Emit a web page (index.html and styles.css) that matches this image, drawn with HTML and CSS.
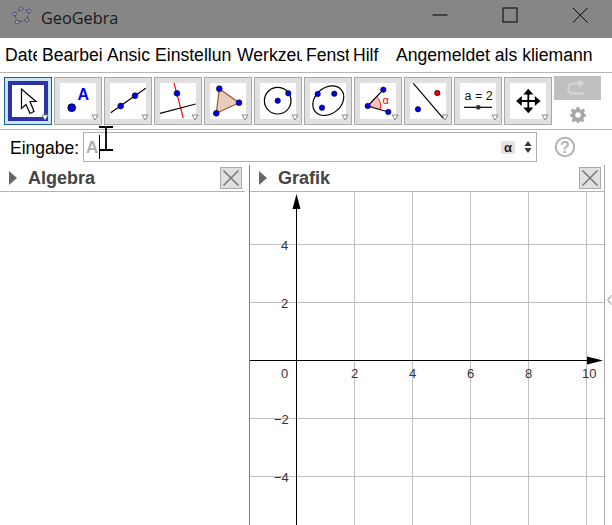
FILE: index.html
```html
<!DOCTYPE html>
<html lang="de">
<head>
<meta charset="utf-8">
<title>GeoGebra</title>
<link rel="stylesheet" href="styles.css">
</head>
<body>
<div class="app">
  <header class="titlebar">
    <svg class="app-logo" viewBox="0 0 20 20" width="20" height="20">
      <polygon points="9,2.5 17,5 15,14 5,16 2.5,8" fill="none" stroke="#444" stroke-width="0.8" stroke-dasharray="3 1.5"/>
      <g fill="#9a9ae0" stroke="#333" stroke-width="0.6">
        <circle cx="9" cy="2.5" r="1.8"/><circle cx="17" cy="5" r="1.8"/><circle cx="15" cy="14" r="1.8"/><circle cx="5" cy="16" r="1.8"/><circle cx="2.5" cy="8" r="1.8"/>
      </g>
    </svg>
    <span class="app-name">GeoGebra</span>
    <div class="win-controls">
      <svg class="win-btn" viewBox="0 0 16 16" width="16" height="16"><path d="M0.5 8H15.5" stroke="#000" fill="none"/></svg>
      <svg class="win-btn" viewBox="0 0 16 16" width="16" height="16"><rect x="1" y="1" width="14" height="14" stroke="#000" fill="none"/></svg>
      <svg class="win-btn" viewBox="0 0 16 16" width="16" height="16"><path d="M1 1L15.5 15.5M15.5 1L1 15.5" stroke="#000" fill="none"/></svg>
    </div>
  </header>

  <nav class="menubar">
    <span class="mi w-date">Datei</span>
    <span class="mi w-bearb">Bearbeiten</span>
    <span class="mi w-ansi">Ansicht</span>
    <span class="mi w-einst">Einstellungen</span>
    <span class="mi w-werk">Werkzeuge</span>
    <span class="mi w-fens">Fenster</span>
    <span class="mi w-hilf">Hilfe</span>
    <span class="login">Angemeldet als kliemann</span>
  </nav>

  <section class="toolbar">
    <div class="tool selected">
      <div class="sel-frame">
        <svg viewBox="0 0 32 32" width="32" height="32"><path d="M9.5 4V23.5L14 19.5L18 28.5L22 26.5L18 16.5H24Z" fill="#fff" stroke="#000" stroke-width="1.2" stroke-linejoin="miter"/></svg>
      </div>
      <svg class="drop" viewBox="0 0 8 7" width="8" height="7"><path d="M1 1H7L4 6Z" fill="#fff" stroke="#888"/></svg>
    </div>
    <div class="tool"><div class="face">
      <svg viewBox="0 0 36 36" width="36" height="36">
        <circle cx="11.7" cy="24.7" r="3.9" fill="#0000f0" stroke="#000" stroke-width="0.8"/>
        <text x="17.5" y="17" class="t-a">A</text>
      </svg></div><svg class="drop" viewBox="0 0 8 7" width="8" height="7"><path d="M1 1H7L4 6Z" fill="#fff" stroke="#888"/></svg></div>
    <div class="tool"><div class="face">
      <svg viewBox="0 0 36 36" width="36" height="36">
        <path d="M0.7 29.7L35.7 5.3" stroke="#000" stroke-width="1.2"/>
        <circle cx="10.7" cy="23" r="2.9" fill="#0000f0" stroke="#000" stroke-width="0.6"/>
        <circle cx="25" cy="12.7" r="2.9" fill="#0000f0" stroke="#000" stroke-width="0.6"/>
      </svg></div><svg class="drop" viewBox="0 0 8 7" width="8" height="7"><path d="M1 1H7L4 6Z" fill="#fff" stroke="#888"/></svg></div>
    <div class="tool"><div class="face">
      <svg viewBox="0 0 36 36" width="36" height="36">
        <path d="M14 0L23.3 35" stroke="#f00" stroke-width="1.1"/>
        <path d="M0 30.3L35.7 21" stroke="#000" stroke-width="1.2"/>
        <circle cx="17" cy="10.3" r="2.9" fill="#0000f0" stroke="#000" stroke-width="0.6"/>
      </svg></div><svg class="drop" viewBox="0 0 8 7" width="8" height="7"><path d="M1 1H7L4 6Z" fill="#fff" stroke="#888"/></svg></div>
    <div class="tool"><div class="face">
      <svg viewBox="0 0 36 36" width="36" height="36">
        <polygon points="9.3,5.7 29,19.7 6.3,30.3" fill="#e8cdbd" stroke="#a2502c" stroke-width="1.2"/>
        <circle cx="9.3" cy="5.7" r="2.9" fill="#0000f0" stroke="#000" stroke-width="0.6"/>
        <circle cx="29" cy="19.7" r="2.9" fill="#0000f0" stroke="#000" stroke-width="0.6"/>
        <circle cx="6.3" cy="30.3" r="2.9" fill="#0000f0" stroke="#000" stroke-width="0.6"/>
      </svg></div><svg class="drop" viewBox="0 0 8 7" width="8" height="7"><path d="M1 1H7L4 6Z" fill="#fff" stroke="#888"/></svg></div>
    <div class="tool"><div class="face">
      <svg viewBox="0 0 36 36" width="36" height="36">
        <circle cx="17.7" cy="17.7" r="13.3" fill="none" stroke="#000" stroke-width="1.2"/>
        <circle cx="17.7" cy="17.7" r="2.7" fill="#0000f0" stroke="#000" stroke-width="0.6"/>
        <circle cx="28.3" cy="10.3" r="2.7" fill="#0000f0" stroke="#000" stroke-width="0.6"/>
      </svg></div><svg class="drop" viewBox="0 0 8 7" width="8" height="7"><path d="M1 1H7L4 6Z" fill="#fff" stroke="#888"/></svg></div>
    <div class="tool"><div class="face">
      <svg viewBox="0 0 36 36" width="36" height="36">
        <ellipse cx="18.3" cy="17.7" rx="17" ry="13" transform="rotate(-40 18.3 17.7)" fill="none" stroke="#000" stroke-width="1.2"/>
        <circle cx="7.7" cy="11" r="2.7" fill="#0000f0" stroke="#000" stroke-width="0.6"/>
        <circle cx="24.3" cy="10.7" r="2.7" fill="#0000f0" stroke="#000" stroke-width="0.6"/>
        <circle cx="12" cy="24.7" r="2.7" fill="#0000f0" stroke="#000" stroke-width="0.6"/>
      </svg></div><svg class="drop" viewBox="0 0 8 7" width="8" height="7"><path d="M1 1H7L4 6Z" fill="#fff" stroke="#888"/></svg></div>
    <div class="tool"><div class="face">
      <svg viewBox="0 0 36 36" width="36" height="36">
        <path d="M7.7 23L16.5 13.8A13 13 0 0 1 20.3 26.6Z" fill="#f6bfbf"/>
        <path d="M16.5 13.8A13 13 0 0 1 20.3 26.6" fill="none" stroke="#f00" stroke-width="0.9"/>
        <path d="M23.3 6.7L7.7 23L28.3 29" fill="none" stroke="#000" stroke-width="1.2"/>
        <circle cx="23.3" cy="6.7" r="2.7" fill="#0000f0" stroke="#000" stroke-width="0.6"/>
        <circle cx="7.7" cy="23" r="2.7" fill="#0000f0" stroke="#000" stroke-width="0.6"/>
        <circle cx="28.3" cy="29" r="2.7" fill="#0000f0" stroke="#000" stroke-width="0.6"/>
        <text x="22.5" y="21" class="t-alpha">α</text>
      </svg></div><svg class="drop" viewBox="0 0 8 7" width="8" height="7"><path d="M1 1H7L4 6Z" fill="#fff" stroke="#888"/></svg></div>
    <div class="tool"><div class="face">
      <svg viewBox="0 0 36 36" width="36" height="36">
        <path d="M3.3 0.3L33.3 35.3" stroke="#000" stroke-width="1.2"/>
        <circle cx="27.3" cy="10" r="2.7" fill="#f00000" stroke="#000" stroke-width="0.6"/>
        <circle cx="8" cy="26.3" r="2.7" fill="#0000f0" stroke="#000" stroke-width="0.6"/>
      </svg></div><svg class="drop" viewBox="0 0 8 7" width="8" height="7"><path d="M1 1H7L4 6Z" fill="#fff" stroke="#888"/></svg></div>
    <div class="tool"><div class="face">
      <svg viewBox="0 0 36 36" width="36" height="36">
        <text x="4.5" y="17" class="t-eq">a = 2</text>
        <path d="M4 24.3H32" stroke="#000" stroke-width="1.2"/>
        <circle cx="18.3" cy="24.3" r="2.4" fill="#333"/>
      </svg></div><svg class="drop" viewBox="0 0 8 7" width="8" height="7"><path d="M1 1H7L4 6Z" fill="#fff" stroke="#888"/></svg></div>
    <div class="tool"><div class="face">
      <svg viewBox="0 0 36 36" width="36" height="36">
        <path d="M18.3 5.7L23.3 11.5H19.2V17.1H24.8V13L30.6 18L24.8 23V18.9H19.2V24.5H23.3L18.3 30.3L13.3 24.5H17.4V18.9H11.8V23L6 18L11.8 13V17.1H17.4V11.5H13.3Z" fill="#000"/>
      </svg></div><svg class="drop" viewBox="0 0 8 7" width="8" height="7"><path d="M1 1H7L4 6Z" fill="#fff" stroke="#888"/></svg></div>
    <div class="side-tools">
      <div class="redo">
        <svg viewBox="0 0 47 24" width="47" height="24"><path d="M25 7.5H18C13 7.5 13 17.5 18 17.5H30" fill="none" stroke="#d6d6d6" stroke-width="2"/><path d="M24.5 3.5L30.5 7.5L24.5 11.5Z" fill="#d6d6d6"/></svg>
      </div>
      <svg class="gear" viewBox="0 0 16 16" width="16" height="16">
        <path d="M6.6 0H9.4L9.8 2.3L11.4 3L13.3 1.6L15.2 3.6L13.8 5.4L14.5 7L16 7.4V9.6L13.9 10L13.2 11.6L14.4 13.4L12.6 15.2L10.8 14L9.4 14.6L9 16H7L6.6 14.6L5.2 14L3.4 15.2L1.6 13.4L2.8 11.6L2.1 10L0 9.6V7.4L1.5 7L2.2 5.4L0.8 3.6L2.7 1.6L4.6 3L6.2 2.3Z M8 5.2A2.8 2.8 0 1 0 8 10.8A2.8 2.8 0 1 0 8 5.2Z" fill="#a6a6a6" fill-rule="evenodd"/>
      </svg>
    </div>
  </section>

  <section class="inputbar">
    <label class="input-label">Eingabe:</label>
    <div class="input-box">
      <span class="hint">A</span><span class="caret"></span>
      <span class="alpha">α</span>
      <svg class="spin" viewBox="0 0 8 12" width="8" height="12"><path d="M4 0L7.5 5H0.5Z M4 12L0.5 7H7.5Z" fill="#333"/></svg>
    </div>
    <svg class="help" viewBox="0 0 22 22" width="22" height="22">
      <circle cx="11" cy="11" r="9.2" fill="none" stroke="#b2b2b2" stroke-width="2"/>
      <text x="11" y="16.5" class="t-help">?</text>
    </svg>
    <svg class="ibeam" viewBox="0 0 14 25" width="14" height="25"><path d="M0 1H5.5Q7 1 7 2Q7 1 8.5 1H14M7 2V23M0 24H14" fill="none" stroke="#000" stroke-width="1.8"/></svg>
  </section>

  <main class="panels">
    <section class="panel algebra">
      <div class="panel-head">
        <span class="tri"></span>
        <h2 class="panel-title">Algebra</h2>
        <svg class="close" viewBox="0 0 22 22" width="22" height="22"><rect x="0.5" y="0.5" width="21" height="21" fill="#e0e0e0" stroke="#aaa"/><path d="M3.5 3.5L18.5 18.5M18.5 3.5L3.5 18.5" stroke="#777" stroke-width="1.5"/></svg>
      </div>
    </section>
    <section class="panel grafik">
      <div class="panel-head">
        <span class="tri"></span>
        <h2 class="panel-title">Grafik</h2>
        <svg class="close" viewBox="0 0 22 22" width="22" height="22"><rect x="0.5" y="0.5" width="21" height="21" fill="#e0e0e0" stroke="#aaa"/><path d="M3.5 3.5L18.5 18.5M18.5 3.5L3.5 18.5" stroke="#777" stroke-width="1.5"/></svg>
      </div>
      <svg class="plot" viewBox="250 192 354 333" width="354" height="333">
        <g stroke="#c0c0c0" stroke-width="1">
          <path d="M354.5 192V525M412.5 192V525M470.5 192V525M528.5 192V525M586.5 192V525"/>
          <path d="M250 244.5H604M250 302.5H604M250 418.5H604M250 476.5H604"/>
        </g>
        <g stroke="#000" stroke-width="1">
          <path d="M250 360.5H590"/>
          <path d="M296.5 206V525"/>
        </g>
        <path d="M603 360.5L587 356.5V364.5Z" fill="#000"/>
        <path d="M296.5 194L292.5 209H300.5Z" fill="#000"/>
        <g class="axis-label">
          <text x="281" y="378">0</text>
          <text x="351" y="378">2</text>
          <text x="409" y="378">4</text>
          <text x="467" y="378">6</text>
          <text x="525" y="378">8</text>
          <text x="582" y="378">10</text>
          <text x="281" y="250">4</text>
          <text x="281" y="308">2</text>
          <text x="274" y="424">−2</text>
          <text x="274" y="482">−4</text>
        </g>
      </svg>
    </section>
    <svg class="edge-arrow" viewBox="0 0 5 10" width="5" height="10"><path d="M4.5 0.5L0.5 5L4.5 9.5" fill="#eee" stroke="#555" stroke-dasharray="1.2 0.6"/></svg>
  </main>
</div>
</body>
</html>
```
FILE: styles.css
```css
* { box-sizing: border-box; }
html, body { margin: 0; padding: 0; background: #fff; }
.app {
  width: 612px;
  height: 525px;
  overflow: hidden;
  font-family: "Liberation Sans", Arial, sans-serif;
  color: #000;
  display: flex;
  flex-direction: column;
}

/* title bar */
.titlebar {
  height: 38px;
  flex: none;
  background: #868686;
  display: flex;
  align-items: center;
  padding-left: 12px;
}
.app-logo { flex: none; margin-top: -6px; }
.app-name {
  margin-left: 9px;
  font-family: "Open Sans", sans-serif;
  font-size: 16.3px;
  color: #1a1a1a;
  margin-top: -3px;
}
.win-controls {
  margin-left: auto;
  display: flex;
  gap: 54px;
  padding-right: 24px;
  margin-top: -8px;
}
.win-btn { display: block; }

/* menu */
.menubar {
  height: 35px;
  flex: none;
  display: flex;
  align-items: center;
  border-bottom: 1px solid #b4b4b4;
  font-size: 17.6px;
  padding-left: 5px;
  padding-top: 1px;
}
.mi { display: block; overflow: hidden; white-space: nowrap; flex: none; margin-right: 5px; }
.w-date { width: 32px; }
.w-bearb { width: 60px; }
.w-ansi { width: 43px; }
.w-einst { width: 77px; }
.w-werk { width: 65px; margin-right: 4px; }
.w-fens { width: 43px; margin-right: 4px; }
.w-hilf { width: 26px; margin-right: 17px; }
.login { white-space: nowrap; }

/* toolbar */
.toolbar {
  height: 57px;
  flex: none;
  display: flex;
  gap: 2px;
  padding: 4px 0 0 4px;
  border-bottom: 1px solid #b4b4b4;
  position: relative;
}
.tool {
  width: 48px;
  height: 48px;
  flex: none;
  border: 1px solid #a8a8a8;
  background: #e0e0e0;
  padding: 5px;
  position: relative;
}
.face {
  width: 36px;
  height: 36px;
  background: #fff;
}
.face svg, .sel-frame svg { display: block; overflow: visible; }
.tool.selected {
  background: #cde4f6;
  border-color: #1b6199;
  padding: 3px;
}
.sel-frame {
  width: 40px;
  height: 40px;
  border: 4px solid #2b33a6;
  background: #fff;
}
.drop { position: absolute; right: 2px; bottom: 3px; }
.side-tools {
  width: 47px;
  flex: none;
  margin-top: -1px;
  display: flex;
  flex-direction: column;
  align-items: center;
}
.redo { width: 47px; height: 24px; background: #c0c0c0; }
.redo svg { display: block; }
.gear { margin-top: 7px; }

/* input */
.inputbar {
  height: 35px;
  flex: none;
  display: flex;
  align-items: flex-start;
  position: relative;
}
.input-label {
  margin: 9px 0 0 10px;
  width: 73px;
  font-size: 17.5px;
  line-height: 18px;
}
.input-box {
  margin-top: 2px;
  width: 454px;
  height: 30px;
  border: 1px solid #b0b0b0;
  display: flex;
  align-items: center;
  position: relative;
}
.hint {
  margin-left: 2px;
  margin-top: 2px;
  font-weight: bold;
  font-size: 17px;
  color: #b0b0b0;
}
.caret { width: 1px; height: 24px; background: #000; margin-left: 1px; }
.alpha {
  margin-left: auto;
  width: 14px;
  height: 13px;
  background: #e2e2e2;
  font-size: 13px;
  font-weight: bold;
  line-height: 13px;
  text-align: center;
  color: #222;
}
.spin { margin: 0 4px 0 9px; }
.help { margin: 6px 0 0 17px; flex: none; }
.t-help { font: bold 16px "Liberation Sans", sans-serif; fill: #b2b2b2; text-anchor: middle; }
.ibeam { position: absolute; left: 99px; top: -4px; }

/* panels */
.panels {
  flex: 1;
  display: flex;
  position: relative;
  min-height: 0;
}
.panel { display: flex; flex-direction: column; min-height: 0; }
.algebra { width: 249px; flex: none; padding-right: 4px; }
.grafik { width: 356px; flex: none; border-left: 1px solid #808080; border-right: 1px solid #a8a8a8; }
.panel-head {
  height: 27px;
  flex: none;
  display: flex;
  align-items: center;
  border-bottom: 1px solid #b4b4b4;
  padding: 0 3px 0 9px;
}
.tri {
  width: 0;
  height: 0;
  border-left: 8px solid #666;
  border-top: 7.5px solid transparent;
  border-bottom: 7.5px solid transparent;
  flex: none;
  margin-top: -1px;
}
.panel-title {
  margin: 1px 0 0 11px;
  font-size: 18px;
  font-weight: bold;
  color: #444;
}
.close { margin-left: auto; flex: none; display: block; }
.plot { display: block; flex: none; }
.axis-label text { font: 13px "Liberation Sans", sans-serif; fill: #333; }
.t-a { font: bold 16px "Liberation Sans", sans-serif; fill: #0000f0; }
.t-alpha { font: 11px "Liberation Sans", sans-serif; fill: #f00000; }
.t-eq { font: 12.5px "Liberation Sans", sans-serif; fill: #111; }
.edge-arrow { position: absolute; left: 607px; top: 130px; }
```
